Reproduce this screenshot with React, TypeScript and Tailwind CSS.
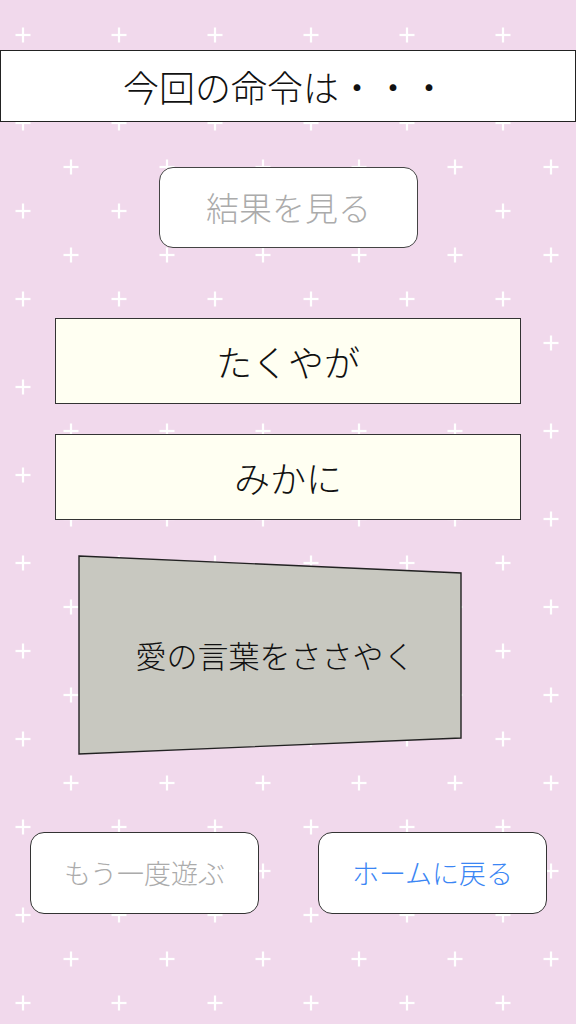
import React from 'react'

const font = { fontFamily: '"Noto Sans CJK JP", "Noto Sans", sans-serif' }

function CrossPattern() {
  return (
    <svg className="absolute inset-0 h-full w-full" xmlns="http://www.w3.org/2000/svg">
      <defs>
        <pattern id="cross" x="0" y="0" width="96" height="88" patternUnits="userSpaceOnUse">
          <g stroke="#ffffff" strokeWidth="2.2">
            <line x1="15.5" y1="35" x2="30.5" y2="35" />
            <line x1="23" y1="27.5" x2="23" y2="42.5" />
            <line x1="63.5" y1="79" x2="78.5" y2="79" />
            <line x1="71" y1="71.5" x2="71" y2="86.5" />
          </g>
        </pattern>
      </defs>
      <rect width="100%" height="100%" fill="#f1d9ec" />
      <rect width="100%" height="100%" fill="url(#cross)" />
    </svg>
  )
}

export default function App() {
  return (
    <div className="relative h-[1024px] w-[576px] overflow-hidden font-light" style={font}>
      <CrossPattern />

      <div className="relative flex flex-col pt-[50px]">
        {/* Title bar */}
        <div className="flex h-[72px] items-center justify-center border-[1.5px] border-[#222] bg-white pr-[6px]">
          <span className="text-[36px] text-[#111]">今回の命令は・・・</span>
        </div>

        {/* Result button */}
        <div className="mt-[45px] flex justify-center pl-[1px]">
          <button className="flex h-[81px] w-[259px] items-center justify-center rounded-[14px] border-[1.5px] border-[#444] bg-white text-[33px] text-[#ababab]">
            結果を見る
          </button>
        </div>

        {/* Who */}
        <div className="mt-[70px] ml-[55px] flex h-[86px] w-[466px] items-center justify-center border-[1.5px] border-[#333] bg-[#fffff2]">
          <span className="text-[36px] text-[#111]">たくやが</span>
        </div>

        {/* To whom */}
        <div className="mt-[30px] ml-[55px] flex h-[86px] w-[466px] items-center justify-center border-[1.5px] border-[#333] bg-[#fffff2]">
          <span className="text-[36px] text-[#111]">みかに</span>
        </div>

        {/* Order card */}
        <div className="relative mt-[35px] ml-[78px] flex h-[200px] w-[384px] items-center justify-center pl-[10px]">
          <svg className="absolute inset-0" width="384" height="200" viewBox="0 0 384 200">
            <polygon points="1,1 383,18 383,183 1,199" fill="#c8c8c0" stroke="#222" strokeWidth="1.4" />
          </svg>
          <span className="relative text-[31px] text-[#111]">愛の言葉をささやく</span>
        </div>

        {/* Bottom actions */}
        <div className="mt-[77px] flex gap-[59px] pl-[30px]">
          <button className="flex h-[82px] w-[229px] items-center justify-center rounded-[14px] border-[1.5px] border-[#333] bg-white text-[27px] text-[#ababab]">
            もう一度遊ぶ
          </button>
          <button className="flex h-[82px] w-[229px] items-center justify-center rounded-[14px] border-[1.5px] border-[#333] bg-white text-[27px] text-[#3b86f4]">
            ホームに戻る
          </button>
        </div>
      </div>
    </div>
  )
}
